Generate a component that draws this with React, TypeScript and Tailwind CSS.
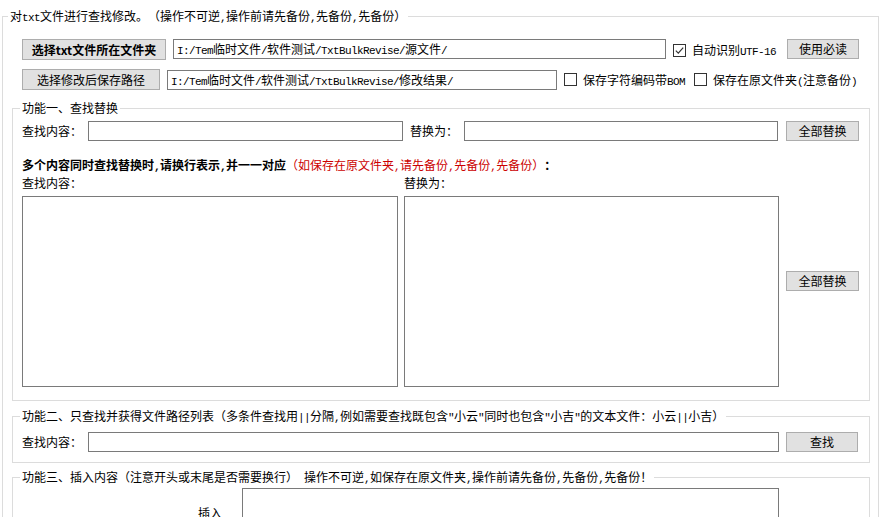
import React from "react";

// ascii runs get a narrow mono face so they look like the SimSun half-width text
function Txt({ text }: { text: string }) {
  const parts = text.split(/([\x00-\x7f]+)/).filter(Boolean);
  return (
    <>
      {parts.map((p, i) =>
        /^[\x00-\x7f]+$/.test(p) ? (
          <span key={i} className="font-['Liberation_Mono'] text-[11px] leading-none tracking-[-0.6px]">
            {p}
          </span>
        ) : (
          <span key={i}>{p}</span>
        )
      )}
    </>
  );
}

function Btn({ children, className = "" }: { children: React.ReactNode; className?: string }) {
  return (
    <button
      className={
        "flex shrink-0 items-center justify-center border border-[#adadad] bg-[#e1e1e1] text-[12px] leading-[16px] text-black " +
        className
      }
    >
      {children}
    </button>
  );
}

function Check({ checked, label, className = "" }: { checked?: boolean; label: string; className?: string }) {
  return (
    <div className={"flex shrink-0 items-center " + className}>
      <span className="flex h-[13px] w-[13px] shrink-0 items-center justify-center border border-[#333333] bg-white">
        {checked && (
          <svg width="11" height="11" viewBox="0 0 11 11" fill="none">
            <path d="M1.8 5.6 L4.3 8.1 L9.2 2.6" stroke="#333333" strokeWidth="1.2" />
          </svg>
        )}
      </span>
      <span className="ml-[6px] whitespace-nowrap">
        <Txt text={label} />
      </span>
    </div>
  );
}

function Field({ className = "", children }: { className?: string; children?: React.ReactNode }) {
  return (
    <div
      className={
        "flex shrink-0 items-center overflow-hidden whitespace-nowrap border border-[#7a7a7a] bg-white pl-[3px] " + className
      }
    >
      <span>{children}</span>
    </div>
  );
}

export default function App() {
  return (
    <div className="h-[517px] w-[882px] overflow-hidden bg-white font-['Noto_Sans_CJK_SC',sans-serif] text-[12px] leading-[16px] text-black [text-spacing-trim:space-all]">
      <fieldset className="ml-[2px] mt-[8px] w-[877px] border border-[#dcdcdc]">
        <legend className="ml-[5px] h-[16px] whitespace-nowrap px-[2px] leading-[16px]">
          <Txt text="对txt文件进行查找修改。（操作不可逆,操作前请先备份,先备份,先备份）" />
        </legend>

        <div className="ml-[19px] mt-[15px] flex items-start">
          <Btn className="h-[21px] w-[144px] font-bold">选择txt文件所在文件夹</Btn>
          <Field className="ml-[7px] h-[20px] w-[493px]">
            <Txt text="I:/Tem临时文件/软件测试/TxtBulkRevise/源文件/" />
          </Field>
          <Check checked label="自动识别UTF-16" className="ml-[7px] mt-[3px] w-[114px]" />
          <Btn className="h-[20px] w-[72px]">使用必读</Btn>
        </div>

        <div className="ml-[19px] mt-[9px] flex items-center">
          <Btn className="h-[21px] w-[138px]">选择修改后保存路径</Btn>
          <Field className="ml-[7px] h-[20px] w-[390px]">
            <Txt text="I:/Tem临时文件/软件测试/TxtBulkRevise/修改结果/" />
          </Field>
          <Check label="保存字符编码带BOM" className="ml-[7px] w-[130px]" />
          <Check label="保存在原文件夹(注意备份)" />
        </div>

        {/* 功能一 */}
        <fieldset className="ml-[9px] mt-[10px] w-[858px] border border-[#dcdcdc] pb-[13px]">
          <legend className="ml-[7px] h-[16px] px-[2px] leading-[16px]">功能一、查找替换</legend>
          <div className="ml-[9px] mt-[5px] flex items-center">
            <span className="w-[66px] shrink-0">查找内容：</span>
            <Field className="h-[20px] w-[315px]" />
            <span className="ml-[7px] w-[54px] shrink-0">替换为：</span>
            <Field className="h-[20px] w-[314px]" />
            <Btn className="ml-[8px] h-[20px] w-[73px]">全部替换</Btn>
          </div>
          <div className="ml-[9px] mt-[16px] h-[16px] whitespace-nowrap">
            <span className="font-bold">
              <Txt text="多个内容同时查找替换时,请换行表示,并一一对应" />
            </span>
            <span className="text-[#cc0000]">
              <Txt text="（如保存在原文件夹,请先备份,先备份,先备份）" />
            </span>
            <span className="font-bold">：</span>
          </div>
          <div className="ml-[9px] mt-[2px] flex items-center">
            <div className="flex w-[376px] shrink-0 flex-col">
              <span>查找内容：</span>
              <div className="mt-[5px] h-[191px] border border-[#7a7a7a] bg-white" />
            </div>
            <div className="ml-[6px] flex w-[375px] shrink-0 flex-col">
              <span>替换为：</span>
              <div className="mt-[5px] h-[191px] border border-[#7a7a7a] bg-white" />
            </div>
            <Btn className="ml-[7px] h-[20px] w-[73px]">全部替换</Btn>
          </div>
        </fieldset>

        {/* 功能二 */}
        <fieldset className="ml-[9px] mt-[7px] w-[858px] border border-[#dcdcdc] pb-[10px]">
          <legend className="ml-[7px] h-[16px] whitespace-nowrap px-[2px] leading-[16px]">
            <Txt text={'功能二、只查找并获得文件路径列表（多条件查找用||分隔,例如需要查找既包含"小云"同时也包含"小吉"的文本文件：小云||小吉）'} />
          </legend>
          <div className="ml-[9px] mt-[8px] flex items-center">
            <span className="w-[66px] shrink-0">查找内容：</span>
            <Field className="h-[20px] w-[691px]" />
            <Btn className="ml-[7px] h-[20px] w-[72px]">查找</Btn>
          </div>
        </fieldset>

        {/* 功能三 */}
        <fieldset className="ml-[9px] mt-[6px] w-[858px] border border-[#dcdcdc] pb-[10px]">
          <legend className="ml-[7px] h-[16px] whitespace-nowrap px-[2px] leading-[16px]">
            <Txt text="功能三、插入内容（注意开头或末尾是否需要换行） 操作不可逆,如保存在原文件夹,操作前请先备份,先备份,先备份！" />
          </legend>
          <div className="ml-[9px] mt-[3px] flex items-start">
            <span className="mt-[17px] w-[220px] shrink-0 pr-[20px] text-right">插入</span>
            <div className="h-[60px] w-[537px] border border-[#7a7a7a] bg-white" />
          </div>
        </fieldset>
      </fieldset>
    </div>
  );
}
